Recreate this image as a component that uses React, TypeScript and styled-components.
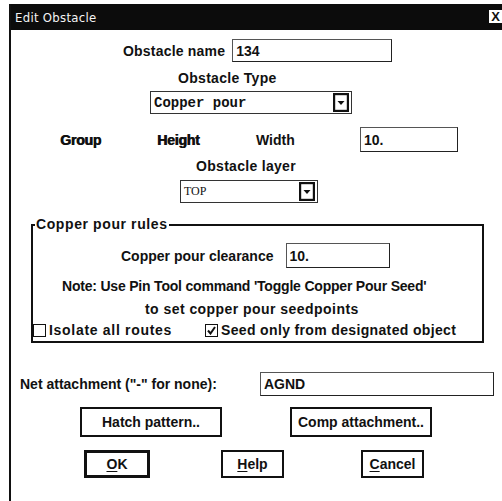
import styled, { createGlobalStyle } from "styled-components";

const GlobalStyle = createGlobalStyle`
  html, body {
    margin: 0;
    padding: 0;
    background: #fff;
  }
  body {
    width: 502px;
    height: 501px;
    overflow: hidden;
    font-family: "Liberation Sans", Arial, sans-serif;
    color: #111;
  }
`;

const DropArrow = () => (
  <svg width="16" height="19" viewBox="0 0 16 19">
    <rect x="1" y="1" width="14" height="17" fill="#fff" stroke="#111" strokeWidth="2.4" />
    <path d="M4.5 8 L11.5 8 L8 12 Z" fill="#111" />
  </svg>
);

const CheckMark = () => (
  <svg width="9" height="9" viewBox="0 0 9 9">
    <path d="M1 4.5 L3.5 7.5 L8 1" fill="none" stroke="#111" strokeWidth="2" />
  </svg>
);

export default function App() {
  return (
    <>
      <GlobalStyle />
      <Window>
        <TitleBar>
          <TitleText>Edit Obstacle</TitleText>
          <CloseBox>X</CloseBox>
        </TitleBar>

        <Row top={9} h={23} left={112} gap={7}>
          <Label spacing={0.2}>Obstacle name</Label>
          <TextField w={160}>134</TextField>
        </Row>

        <Row top={8} h={16} left={167}>
          <Label spacing={0.3}>Obstacle Type</Label>
        </Row>

        <Row top={5} h={23} left={139}>
          <Select w={202}>
            <SelectText mono>Copper pour</SelectText>
            <DropArrow />
          </Select>
        </Row>

        <Row top={13} h={25} left={49}>
          <Cell w={97}>
            <HeavyLabel>Group</HeavyLabel>
          </Cell>
          <Cell w={99}>
            <HeavyLabel>Height</HeavyLabel>
          </Cell>
          <Cell w={104}>
            <Label>Width</Label>
          </Cell>
          <TextField w={98}>10.</TextField>
        </Row>

        <Row top={6} h={16} left={185}>
          <Label spacing={0.3}>Obstacle layer</Label>
        </Row>

        <Row top={6} h={23} left={169}>
          <Select w={138}>
            <SelectText>TOP</SelectText>
            <DropArrow />
          </Select>
        </Row>

        <GroupBox>
          <GroupTitle>Copper pour rules</GroupTitle>
          <Row top={17} h={25} left={88} gap={12}>
            <Label>Copper pour clearance</Label>
            <TextField w={104}>10.</TextField>
          </Row>
          <Row top={10} h={16} left={29}>
            <Label spacing={-0.2}>Note: Use Pin Tool command 'Toggle Copper Pour Seed'</Label>
          </Row>
          <Row top={7} h={16} left={112}>
            <Label spacing={0.45}>to set copper pour seedpoints</Label>
          </Row>
          <Row top={5} h={16} left={0}>
            <Check w={172}>
              <Box />
              <Label spacing={0.7}>Isolate all routes</Label>
            </Check>
            <Check>
              <Box>
                <CheckMark />
              </Box>
              <Label spacing={0.35}>Seed only from designated object</Label>
            </Check>
          </Row>
        </GroupBox>

        <Row top={29} h={24} left={9}>
          <Cell w={240}>
            <Label>Net attachment ("-" for none):</Label>
          </Cell>
          <TextField w={234}>AGND</TextField>
        </Row>

        <Row top={11} h={30} left={69} gap={68}>
          <Button w={142}>Hatch pattern..</Button>
          <Button w={142}>Comp attachment..</Button>
        </Row>

        <Row top={13} h={28} left={73}>
          <Button w={66} isDefault>
            <u>O</u>K
          </Button>
          <Spacer w={71} />
          <Button w={63}>
            <u>H</u>elp
          </Button>
          <Spacer w={77} />
          <Button w={63}>
            <u>C</u>ancel
          </Button>
        </Row>
      </Window>
    </>
  );
}

const Window = styled.div`
  margin: 4px 0 0 9px;
  height: 497px;
  border-left: 2px solid #111;
  display: flex;
  flex-direction: column;
`;

const TitleBar = styled.div`
  height: 26px;
  background: #0c0c0c;
  display: flex;
  align-items: center;
  justify-content: space-between;
  padding: 0 0 0 4px;
`;

const TitleText = styled.span`
  color: #f4f4f4;
  font-size: 13px;
  font-family: "Liberation Sans Narrow", "DejaVu Sans Condensed", "Liberation Sans", sans-serif;
  letter-spacing: 0.3px;
`;

const CloseBox = styled.span`
  width: 13px;
  height: 13px;
  background: #fff;
  color: #111;
  font-size: 13px;
  font-weight: bold;
  line-height: 13px;
  text-align: center;
  margin-top: -2px;
`;

const Row = styled.div<{ top: number; h: number; left: number; gap?: number }>`
  display: flex;
  align-items: center;
  margin-top: ${(p) => p.top}px;
  height: ${(p) => p.h}px;
  padding-left: ${(p) => p.left}px;
  gap: ${(p) => p.gap ?? 0}px;
  flex-shrink: 0;
`;

const Label = styled.span<{ spacing?: number }>`
  font-size: 14px;
  font-weight: bold;
  white-space: nowrap;
  letter-spacing: ${(p) => p.spacing ?? 0}px;
`;

const HeavyLabel = styled(Label)`
  text-shadow: 0.7px 0 0 #111;
  letter-spacing: -0.2px;
`;

const Cell = styled.div<{ w: number }>`
  width: ${(p) => p.w}px;
  flex-shrink: 0;
`;

const Spacer = styled.div<{ w: number }>`
  width: ${(p) => p.w}px;
  flex-shrink: 0;
`;

const TextField = styled.div<{ w: number }>`
  box-sizing: border-box;
  width: ${(p) => p.w}px;
  height: 100%;
  border: 1px solid #222;
  border-top-color: #555;
  border-left-color: #555;
  display: flex;
  align-items: center;
  padding-left: 3px;
  font-size: 14px;
  font-weight: bold;
`;

const Select = styled.div<{ w: number }>`
  box-sizing: border-box;
  width: ${(p) => p.w}px;
  height: 100%;
  border: 1px solid #333;
  display: flex;
  align-items: center;
  justify-content: space-between;
  padding: 0 2px 0 3px;
`;

const SelectText = styled.span<{ mono?: boolean }>`
  font-family: ${(p) =>
    p.mono ? '"Liberation Mono", "Courier New", monospace' : '"Liberation Serif", "Times New Roman", serif'};
  font-size: ${(p) => (p.mono ? 14 : 12)}px;
  font-weight: ${(p) => (p.mono ? "bold" : "normal")};
`;

const GroupBox = styled.div`
  position: relative;
  box-sizing: border-box;
  margin: 21px 0 0 20px;
  width: 453px;
  height: 119px;
  border: 2px solid #111;
  flex-shrink: 0;
`;

const GroupTitle = styled.span`
  position: absolute;
  top: -10px;
  left: 2px;
  padding: 0 1px;
  background: #fff;
  font-size: 14px;
  font-weight: bold;
  letter-spacing: 0.6px;
`;

const Check = styled.div<{ w?: number }>`
  display: flex;
  align-items: center;
  gap: 3px;
  width: ${(p) => (p.w ? `${p.w}px` : "auto")};
`;

const Box = styled.span`
  box-sizing: border-box;
  width: 13px;
  height: 13px;
  border: 1.5px solid #111;
  display: flex;
  align-items: center;
  justify-content: center;
`;

const Button = styled.div<{ w: number; isDefault?: boolean }>`
  box-sizing: border-box;
  width: ${(p) => p.w}px;
  height: 100%;
  border: ${(p) => (p.isDefault ? 3 : 2)}px solid #111;
  display: flex;
  align-items: center;
  justify-content: center;
  font-size: 14px;
  font-weight: bold;
  flex-shrink: 0;

  u {
    text-underline-offset: 2px;
  }
`;
